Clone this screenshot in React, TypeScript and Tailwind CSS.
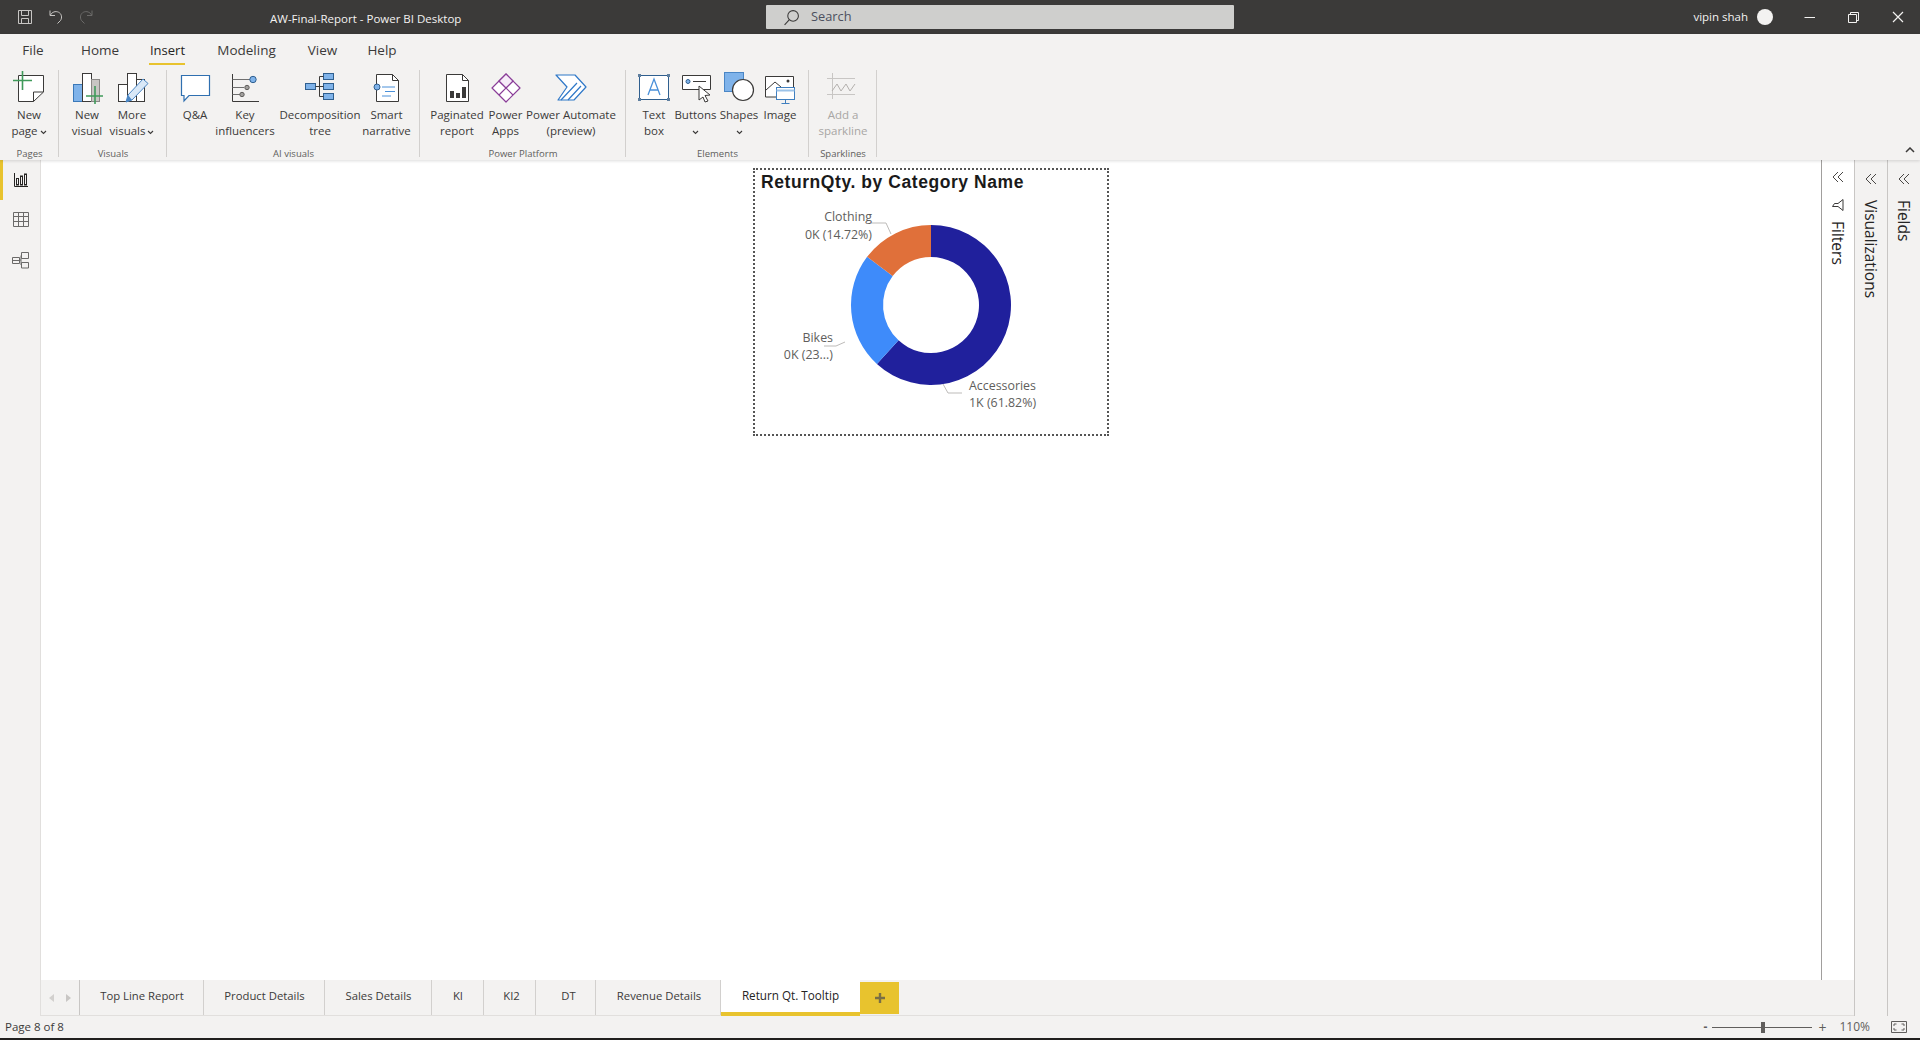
import React from "react";

const FONT = "font-['Open_Sans','Noto_Sans',sans-serif]";

function polar(cx: number, cy: number, r: number, a: number) {
  const t = (a / 100) * 2 * Math.PI;
  return [cx + r * Math.sin(t), cy - r * Math.cos(t)];
}
function arc(cx: number, cy: number, R: number, r: number, a: number, b: number) {
  const large = b - a > 50 ? 1 : 0;
  const [x1, y1] = polar(cx, cy, R, a);
  const [x2, y2] = polar(cx, cy, R, b);
  const [x3, y3] = polar(cx, cy, r, b);
  const [x4, y4] = polar(cx, cy, r, a);
  return `M${x1} ${y1}A${R} ${R} 0 ${large} 1 ${x2} ${y2}L${x3} ${y3}A${r} ${r} 0 ${large} 0 ${x4} ${y4}Z`;
}

const B = "#2f5f8f";
const K = "#3b3a39";
const LB = "#7fb3ea";
const G = "#3f9a5a";

function Ic({ children, w = 34 }: { children: React.ReactNode; w?: number }) {
  return (
    <svg width={w} height={34} viewBox={`0 0 ${w} 34`} fill="none" strokeWidth={1} className="block">
      {children}
    </svg>
  );
}

const icons: Record<string, React.ReactNode> = {
  page: (
    <Ic>
      <path d="M6.5 5.5H31.5V22L21.5 31.5H6.5Z" fill="#fff" stroke={K} />
      <path d="M21.5 31.5V22H31.5" stroke={K} />
      <path d="M10.5 1V20M1 10.5H20" stroke={G} strokeWidth={1.6} />
    </Ic>
  ),
  newvisual: (
    <Ic>
      <rect x="3.5" y="14.5" width="9" height="17" fill={LB} stroke="#3a78b8" />
      <rect x="12.5" y="3.5" width="9" height="28" fill="#fff" stroke={K} />
      <rect x="21.5" y="9.5" width="8" height="22" fill="#c8c6c4" stroke="#8a8886" />
      <path d="M25 16V35M16 26H33" stroke={G} strokeWidth={1.6} />
    </Ic>
  ),
  morevisual: (
    <Ic>
      <rect x="3.5" y="14.5" width="9" height="17" fill="#fff" stroke={K} />
      <rect x="12.5" y="3.5" width="9" height="28" fill="#fff" stroke={K} />
      <rect x="21.5" y="9.5" width="8" height="22" fill="#fff" stroke={K} />
      <path d="M28 9L33 13.5L17 30L11 32L13 25Z" fill="#d9e8f7" stroke="#4a86c5" />
      <path d="M11 32L13 25L17 30Z" fill="#4a86c5" />
    </Ic>
  ),
  qa: (
    <Ic>
      <path d="M3.5 5.5H31.5V25.5H11L6 31V25.5H3.5Z" fill="#fff" stroke="#2f6fb0" strokeWidth={1.2} />
    </Ic>
  ),
  key: (
    <Ic>
      <path d="M4.5 4V31.5H31" stroke={K} />
      <path d="M4.5 9.5H22M4.5 17.5H16M4.5 24.5H12" stroke="#6f6f6f" />
      <circle cx="25" cy="9.5" r="3.2" fill={LB} stroke={B} />
      <circle cx="19" cy="17.5" r="2.2" fill="#a19f9d" stroke="#605e5c" />
      <circle cx="14" cy="24.5" r="2.2" fill="#a19f9d" stroke="#605e5c" />
    </Ic>
  ),
  decomp: (
    <Ic>
      <rect x="2.5" y="13.5" width="10" height="6" fill={LB} stroke={B} />
      <rect x="20.5" y="3.5" width="10" height="6" fill={LB} stroke={B} />
      <rect x="20.5" y="13.5" width="10" height="6" fill={LB} stroke={B} />
      <rect x="20.5" y="23.5" width="10" height="6" fill={LB} stroke={B} />
      <path d="M12.5 16.5H20.5M16.5 6.5V26.5M16.5 6.5H20.5M16.5 26.5H20.5" stroke={K} />
    </Ic>
  ),
  smart: (
    <Ic>
      <path d="M6.5 4.5H22.5L28.5 10.5V31.5H6.5Z" fill="#fff" stroke={K} />
      <path d="M22.5 4.5V10.5H28.5" stroke={K} />
      <circle cx="7" cy="17" r="3" fill={LB} stroke={B} />
      <path d="M12 17H25M15 21.5H25M12 26H21" stroke="#4a90d9" />
    </Ic>
  ),
  paginated: (
    <Ic>
      <path d="M6.5 4.5H22.5L28.5 10.5V31.5H6.5Z" fill="#fff" stroke={K} />
      <path d="M22.5 4.5V10.5H28.5" stroke={K} />
      <rect x="10" y="21" width="4" height="7" fill={K} />
      <rect x="16" y="23" width="4" height="5" fill={K} />
      <rect x="22" y="17" width="4" height="11" fill={K} />
    </Ic>
  ),
  apps: (
    <Ic>
      <path d="M17 4L31 18L17 32L3 18Z" fill="#fff" stroke="#8a3d98" strokeWidth={1.2} strokeLinejoin="round" />
      <path d="M10 11L24 25M24 11L10 25" stroke="#8a3d98" strokeWidth={1.2} />
      <path d="M17 4L24 11L17 18L10 11Z" fill="#f6ecf8" stroke="#8a3d98" strokeWidth={1.2} />
    </Ic>
  ),
  automate: (
    <Ic>
      <path d="M2 5H21L32 17L20 30H4L13 17Z" fill="#fff" stroke="#2f78c8" strokeWidth={1.2} strokeLinejoin="round" />
      <path d="M7 30L23 13M14 30L27 16" stroke="#2f78c8" strokeWidth={1.2} />
    </Ic>
  ),
  textbox: (
    <Ic>
      <rect x="2.5" y="5.5" width="29" height="24" fill="#fff" stroke={B} />
      <rect x="1" y="4" width="3" height="3" fill="#5f7f9f" />
      <rect x="30" y="4" width="3" height="3" fill="#5f7f9f" />
      <rect x="1" y="28" width="3" height="3" fill="#5f7f9f" />
      <rect x="30" y="28" width="3" height="3" fill="#5f7f9f" />
      <path d="M11 25L17 9L23 25M13 20H21" stroke="#4a90d9" strokeWidth={1.3} />
    </Ic>
  ),
  buttons: (
    <Ic>
      <path d="M3.5 5.5H31.5V19.5H3.5Z" fill="#fff" stroke={K} />
      <circle cx="9" cy="11.5" r="2" fill={LB} stroke={B} />
      <path d="M14 11.5H27" stroke={K} />
      <path d="M20 16L31 25L26 25.5L29 31L26 32L24 27L20 30Z" fill="#fff" stroke={K} />
    </Ic>
  ),
  shapes: (
    <Ic>
      <rect x="2.5" y="2.5" width="19" height="19" fill={LB} stroke="#4a86c5" />
      <circle cx="21" cy="20" r="10.5" fill="#fff" stroke={K} strokeWidth={1.2} />
    </Ic>
  ),
  image: (
    <Ic>
      <path d="M2.5 6.5H30.5V18H19V27H2.5Z" fill="#fff" stroke={K} />
      <path d="M3 20L12 12L18 17" stroke={K} />
      <circle cx="25" cy="11" r="1.5" fill={K} />
      <rect x="13.5" y="17.5" width="18" height="12" fill="#fff" stroke="#3f7fbf" />
      <path d="M13.5 20.5H31.5" stroke="#9cc3e8" strokeWidth={2} />
      <path d="M22.5 29.5V33M18.5 33.5H26.5" stroke="#3f7fbf" />
    </Ic>
  ),
  spark: (
    <Ic>
      <path d="M6.5 3V29M1 8.5H29M1 24.5H29" stroke="#c8c6c4" />
      <path d="M6 21L11 14L15 21L20 14L24 21L29 14" stroke="#b3b0ad" />
    </Ic>
  ),
};

function Chevron({ className = "" }: { className?: string }) {
  return (
    <svg width="7" height="5" viewBox="0 0 7 5" fill="none" className={className}>
      <path d="M1 1L3.5 3.5L6 1" stroke="#3b3a39" strokeWidth="1.1" />
    </svg>
  );
}

type Item = { icon: string; l1: string; l2?: string; w: number; chev?: "inline" | "below"; off?: boolean };

function RibbonItem({ it }: { it: Item }) {
  const color = it.off ? "text-[#a8a6a4]" : "text-[#3b3a39]";
  return (
    <div className="flex flex-col items-center shrink-0" style={{ width: it.w }}>
      <div className="h-[41px] pt-[4px] flex justify-center">{icons[it.icon]}</div>
      <div className={`text-[11.5px] leading-[16px] whitespace-nowrap ${color}`}>{it.l1}</div>
      <div className={`text-[11.5px] leading-[16px] h-[16px] whitespace-nowrap flex items-center gap-[2px] ${color}`}>
        {it.chev === "below" ? <Chevron className="mt-[2px]" /> : it.l2}
        {it.chev === "inline" && <Chevron className="mt-[2px]" />}
      </div>
    </div>
  );
}

function Group({ label, w, pl, items }: { label: string; w: number; pl: number; items: Item[] }) {
  return (
    <div className="relative flex flex-col shrink-0 h-full" style={{ width: w }}>
      <div className="flex flex-1" style={{ paddingLeft: pl }}>
        {items.map((it) => (
          <RibbonItem key={it.icon} it={it} />
        ))}
      </div>
      <div className="text-center text-[9.5px] leading-[13px] text-[#605e5c]">{label}</div>
      <div className="absolute right-0 top-[4px] bottom-[3px] w-px bg-[#d2d0ce]" />
    </div>
  );
}

const menu = [
  { t: "File", w: 40 },
  { t: "Home", w: 94 },
  { t: "Insert", w: 41 },
  { t: "Modeling", w: 117 },
  { t: "View", w: 35 },
  { t: "Help", w: 84 },
];
const tabs = [
  { t: "Top Line Report", w: 124, pl: 1 },
  { t: "Product Details", w: 121, pl: 1 },
  { t: "Sales Details", w: 107, pl: 1 },
  { t: "KI", w: 52, pl: 1 },
  { t: "KI2", w: 52, pl: 4 },
  { t: "DT", w: 60, pl: 6 },
  { t: "Revenue Details", w: 125, pl: 2 },
];

function Chevrons({ className = "" }: { className?: string }) {
  return (
    <svg width="12" height="12" viewBox="0 0 12 12" fill="none" className={className}>
      <path d="M6 1L1 6L6 11M11 1L6 6L11 11" stroke="#4a4846" strokeWidth="1" />
    </svg>
  );
}

function SidePane({ label, bg }: { label: string; bg: string }) {
  return (
    <div className={`w-[33px] shrink-0 border-l border-[#c8c6c4] flex flex-col items-center pt-[13px] ${bg}`}>
      <Chevrons />
      <div className="mt-[15px] [writing-mode:vertical-rl] text-[15.5px] leading-[20px] text-[#252423] whitespace-nowrap">{label}</div>
    </div>
  );
}

export default function App() {
  const cx = 176;
  const cy = 135;
  return (
    <div className={`w-[1920px] h-[1040px] flex flex-col overflow-hidden bg-[#f3f2f1] ${FONT}`}>
      {/* title bar */}
      <div className="h-[34px] shrink-0 bg-[#3b3a39] flex items-center relative text-[#f3f2f1]">
        <div className="flex items-center pl-[16px] gap-[14px] w-[270px]">
          <svg width="18" height="18" viewBox="0 0 18 18" fill="none">
            <path d="M2.5 2.5H15.5V15.5H2.5Z" stroke="#c8c6c4" />
            <path d="M5.5 2.5V7.5H12.5V2.5M5.5 15.5V10.5H12.5V15.5" stroke="#c8c6c4" />
          </svg>
          <svg width="16" height="16" viewBox="0 0 16 16" fill="none">
            <path d="M2 1.5V6.5H7M2.5 6C4 3 7.5 1.8 10.5 3.2C13.5 4.6 14.5 8.5 12.5 11.5L9.5 14.5" stroke="#c8c6c4" />
          </svg>
          <svg width="16" height="16" viewBox="0 0 16 16" fill="none">
            <path d="M14 1.5V6.5H9M13.5 6C12 3 8.5 1.8 5.5 3.2C2.5 4.6 1.5 8.5 3.5 11.5L6.5 14.5" stroke="#6b6a69" />
          </svg>
        </div>
        <div className="text-[11.5px] leading-[16px] mt-[3px] whitespace-nowrap">AW-Final-Report - Power BI Desktop</div>
        <div className="absolute left-[766px] top-[5px] w-[468px] h-[24px] bg-[#cfcfcd] rounded-[1px] flex items-center pl-[17px] gap-[11px]">
          <svg width="17" height="17" viewBox="0 0 16 16" fill="none">
            <circle cx="9.5" cy="6.5" r="5" stroke="#3b3a39" />
            <path d="M6 10L1.5 15" stroke="#3b3a39" />
          </svg>
          <span className="text-[12.8px] text-[#4c4f5e]">Search</span>
        </div>
        <div className="ml-auto flex items-center h-full">
          <span className="text-[11.5px] mr-[9px] whitespace-nowrap">vipin shah</span>
          <div className="w-4 h-4 rounded-full bg-[#f3f2f1] mr-[31px]" />
          <svg width="12" height="12" viewBox="0 0 12 12" fill="none" className="mr-[32px]">
            <path d="M0.5 6.5H11" stroke="#f3f2f1" />
          </svg>
          <svg width="11" height="11" viewBox="0 0 11 11" fill="none" className="mr-[33px]">
            <path d="M0.5 2.5H8.5V10.5H0.5ZM2.5 2.5V0.5H10.5V8.5H8.5" stroke="#f3f2f1" />
          </svg>
          <svg width="12" height="12" viewBox="0 0 12 12" fill="none" className="mr-[16px]">
            <path d="M1 1L11 11M11 1L1 11" stroke="#f3f2f1" strokeWidth="1.2" />
          </svg>
        </div>
      </div>

      {/* menu + ribbon */}
      <div className="h-[126px] shrink-0 flex flex-col relative z-10 shadow-[0_1px_3px_rgba(0,0,0,0.14)]">
        <div className="h-[32px] shrink-0 flex items-start pl-[13px] text-[13.5px] leading-[32px] text-[#3b3a39]">
          {menu.map((m) => (
            <span
              key={m.t}
              style={{ width: m.w }}
              className={m.t === "Insert" ? "relative text-center shrink-0 text-[13px] text-[#252423] font-medium" : "text-center shrink-0"}
            >
              {m.t}
              {m.t === "Insert" && <span className="absolute left-[2px] right-[3px] top-[29px] h-[2px] bg-[#e8c32e]" />}
            </span>
          ))}
        </div>
        <div className="flex-1 flex relative">
          <Group label="Pages" w={59} pl={0} items={[{ icon: "page", l1: "New", l2: "page", w: 58, chev: "inline" }]} />
          <Group
            label="Visuals"
            w={108}
            pl={5}
            items={[
              { icon: "newvisual", l1: "New", l2: "visual", w: 46 },
              { icon: "morevisual", l1: "More", l2: "visuals", w: 44, chev: "inline" },
            ]}
          />
          <Group
            label="AI visuals"
            w={253}
            pl={6}
            items={[
              { icon: "qa", l1: "Q&A", w: 44 },
              { icon: "key", l1: "Key", l2: "influencers", w: 56 },
              { icon: "decomp", l1: "Decomposition", l2: "tree", w: 94 },
              { icon: "smart", l1: "Smart", l2: "narrative", w: 39 },
            ]}
          />
          <Group
            label="Power Platform"
            w={206}
            pl={10}
            items={[
              { icon: "paginated", l1: "Paginated", l2: "report", w: 54 },
              { icon: "apps", l1: "Power", l2: "Apps", w: 43 },
              { icon: "automate", l1: "Power Automate", l2: "(preview)", w: 88 },
            ]}
          />
          <Group
            label="Elements"
            w={183}
            pl={7}
            items={[
              { icon: "textbox", l1: "Text", l2: "box", w: 42 },
              { icon: "buttons", l1: "Buttons", w: 41, chev: "below" },
              { icon: "shapes", l1: "Shapes", w: 46, chev: "below" },
              { icon: "image", l1: "Image", w: 36 },
            ]}
          />
          <Group label="Sparklines" w={68} pl={0} items={[{ icon: "spark", l1: "Add a", l2: "sparkline", w: 68, off: true }]} />
          <svg width="10" height="6" viewBox="0 0 10 6" fill="none" className="absolute right-[5px] bottom-[7px]">
            <path d="M1 5L5 1L9 5" stroke="#3b3a39" strokeWidth="1.5" />
          </svg>
        </div>
      </div>

      {/* middle */}
      <div className="flex-1 flex min-h-0">
        {/* left rail */}
        <div className="w-[41px] shrink-0 border-r border-[#e1dfdd] flex flex-col">
          <div className="h-[40px] border-l-[3px] border-[#e8c32e] flex items-center justify-center pr-[2px]">
            <svg width="16" height="16" viewBox="0 0 16 16" fill="none">
              <path d="M1.5 1V14.5H15" stroke="#252423" />
              <rect x="3.5" y="6.5" width="2" height="6.5" stroke="#252423" />
              <rect x="7.5" y="4" width="2" height="9" stroke="#252423" />
              <rect x="11.5" y="2" width="2" height="11" stroke="#252423" />
            </svg>
          </div>
          <div className="h-[40px] flex items-center justify-center pl-[1px] pb-[2px]">
            <svg width="16" height="16" viewBox="0 0 16 16" fill="none">
              <path d="M0.5 1.5H15.5V15.5H0.5ZM0.5 5.5H15.5M0.5 10.5H15.5M5.5 1.5V15.5M10.5 1.5V15.5" stroke="#6b6a69" />
            </svg>
          </div>
          <div className="h-[40px] flex items-center justify-center pl-[1px]">
            <svg width="18" height="18" viewBox="0 0 18 18" fill="none">
              <path d="M0.5 6.5H7.5V12.5H0.5ZM9.5 1.5H16.5V7.5H9.5ZM9.5 11.5H16.5V17H9.5ZM7.5 9H9M9 4.5V14M9 4.5H9.5M9 14H9.5M0.5 9.5H7.5" stroke="#6b6a69" />
            </svg>
          </div>
        </div>

        {/* centre column */}
        <div className="flex-1 min-w-0 flex flex-col">
          <div className="flex-1 min-h-0 flex bg-white">
            <div className="flex-1 relative">
              <div className="absolute left-[712px] top-[8px] w-[356px] h-[268px] border-2 border-dotted border-[#555] bg-white">
                <div className="font-['Liberation_Sans',sans-serif] font-bold text-[17.5px] leading-[20px] text-[#1a1a1a] pl-[6px] pt-[2px] whitespace-nowrap tracking-[0.57px]">
                  ReturnQty. by Category Name
                </div>
                <svg width="352" height="264" viewBox="0 0 352 264" className="absolute left-0 top-0">
                  <path d={arc(cx, cy, 80, 48, 0, 61.82)} fill="#20209c" />
                  <path d={arc(cx, cy, 80, 48, 61.82, 85.28)} fill="#3e8bfa" />
                  <path d={arc(cx, cy, 80, 48, 85.28, 100)} fill="#e0703a" />
                  <g fill="none" stroke="#bdbbb9" strokeWidth="1">
                    <path d="M136 64L131 53H116" />
                    <path d="M90 172L81 176H69" />
                    <path d="M188 214L193 223H207" />
                  </g>
                  <g fontSize="12.4" fill="#605e5c" fontFamily="'Open Sans','Noto Sans',sans-serif">
                    <text x="117" y="51" textAnchor="end">Clothing</text>
                    <text x="117" y="69" textAnchor="end">0K (14.72%)</text>
                    <text x="78" y="172" textAnchor="end">Bikes</text>
                    <text x="78" y="189" textAnchor="end">0K (23...)</text>
                    <text x="214" y="219.500">Accessories</text>
                    <text x="214" y="236.500">1K (61.82%)</text>
                  </g>
                </svg>
              </div>
            </div>
            <div className="w-[33px] shrink-0 border-l border-[#a19f9d] flex flex-col items-center pt-[11px] bg-white">
              <Chevrons className="mb-[15px]" />
              <svg width="14" height="14" viewBox="0 0 14 14" fill="none" className="rotate-90 mb-[9px]">
                <path d="M1.5 2H12.5L8.5 7V12.5L5.5 10.5V7Z" stroke="#3b3a39" strokeWidth="1" />
              </svg>
              <div className="[writing-mode:vertical-rl] text-[15.5px] leading-[20px] text-[#252423] whitespace-nowrap">Filters</div>
            </div>
          </div>
          {/* page tabs */}
          <div className="h-[36px] shrink-0 flex items-stretch border-b border-[#e1dfdd] text-[11.3px] text-[#3b3a39]">
            <div className="w-[39px] flex items-center justify-center gap-[12px] border-r border-[#c8c6c4]">
              <svg width="5" height="8" viewBox="0 0 5 8"><path d="M5 0V8L0 4Z" fill="#d2d0ce" /></svg>
              <svg width="5" height="8" viewBox="0 0 5 8"><path d="M0 0V8L5 4Z" fill="#c8c6c4" /></svg>
            </div>
            {tabs.map((t) => (
              <div
                key={t.t}
                className="flex items-center justify-center border-r border-[#d2d0ce] whitespace-nowrap shrink-0 pb-[2px]"
                style={{ width: t.w, paddingLeft: t.pl }}
              >
                {t.t}
              </div>
            ))}
            <div className="w-[139px] shrink-0 bg-white border-b-[4px] border-[#e8c32e] flex items-center justify-center text-[11.7px] text-[#252423] mb-[-1px] whitespace-nowrap">
              Return Qt. Tooltip
            </div>
            <div className="w-[39px] h-[32px] mt-[2px] shrink-0 bg-[#e8c32e] flex items-center justify-center">
              <svg width="12" height="12" viewBox="0 0 12 12">
                <path d="M6 1V11M1 6H11" stroke="#7a6f45" strokeWidth="2.4" />
              </svg>
            </div>
          </div>
        </div>

        <SidePane label="Visualizations" bg="bg-[#f3f2f1]" />
        <SidePane label="Fields" bg="bg-[#f3f2f1]" />
      </div>

      {/* status bar */}
      <div className="h-[24px] shrink-0 border-b-2 border-[#201f1e] flex items-center pl-[5px] text-[11.5px] text-[#3b3a39]">
        <span>Page 8 of 8</span>
        <div className="ml-auto flex items-center pr-[13px]">
          <span className="text-[12px] font-bold text-[#605e5c] mr-[5px]">-</span>
          <div className="relative w-[100px] h-px bg-[#605e5c] mr-[6px]">
            <div className="absolute left-[49px] top-[-5px] w-[4px] h-[11px] bg-[#605e5c]" />
          </div>
          <span className="text-[14px] text-[#605e5c] mr-[13px]">+</span>
          <span className="text-[12px] text-[#605e5c] mr-[21px]">110%</span>
          <svg width="16" height="12" viewBox="0 0 16 12" fill="none">
            <path d="M0.5 0.5H15.5V11.5H0.5Z" stroke="#605e5c" />
            <path d="M3 5V3H5.5M13 5V3H10.5M3 7V9H5.5M13 7V9H10.5" stroke="#605e5c" />
          </svg>
        </div>
      </div>
    </div>
  );
}
